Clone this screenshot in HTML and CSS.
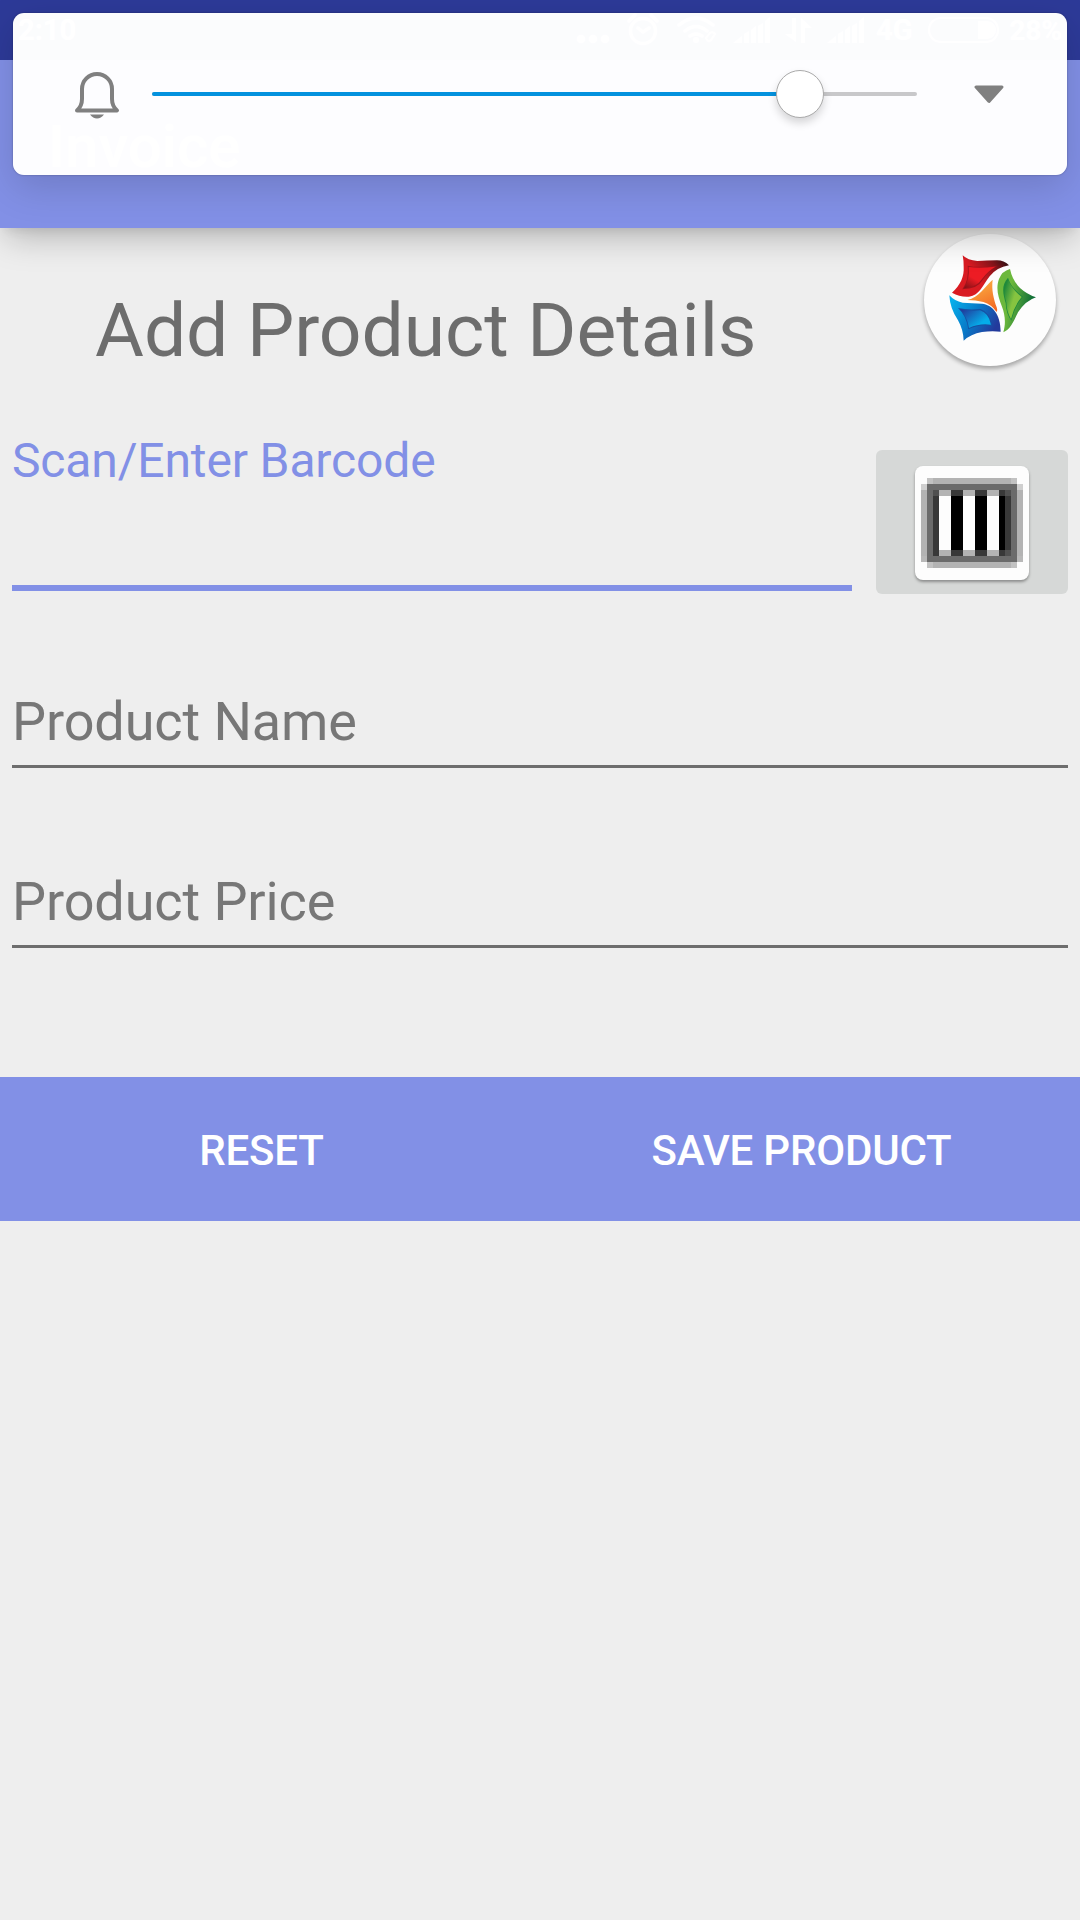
FILE: index.html
```html
<!DOCTYPE html>
<html lang="en">
<head>
<meta charset="utf-8">
<title>Invoice</title>
<link rel="stylesheet" href="styles.css">
</head>
<body>
<div class="statusbar">
  <span class="clock">2:10</span>
  <svg class="status-icons" width="436" height="36" viewBox="570 10 436 36" fill="#fff">
    <circle cx="581" cy="39" r="4.3"/><circle cx="593" cy="39" r="4.3"/><circle cx="605" cy="39" r="4.3"/>
    <g fill="none" stroke="#fff" stroke-width="3.4" stroke-linecap="round">
      <circle cx="643" cy="31" r="12.5"/><path d="M638 28l5 4 6-4M629 21l6-6M657 21l-6-6"/>
      <path d="M679 25q17-14 34 0M685 31q11-9 22 0M690 36q6-4 12 0"/>
      <path d="M706 38l4-5q3-2 5 1l-4 6q-3 3-5-2" stroke-width="2"/>
    </g>
    <circle cx="696" cy="40" r="3"/>
    <path id="signal" d="M733 43l9-7v7zM744 34l5-3v12h-5zM751 30l5-4v17h-5zM758 26l5-3v20h-5zM765 21l5-4v26h-5z"/>
    <path d="M792 18h4v24l-11-8h7zM801 43h4V28h7l-11-10z"/>
    <use href="#signal" x="94"/>
    <rect x="929" y="18" width="69" height="24" rx="12" fill="none" stroke="#fff" stroke-width="2"/>
    <path d="M978 21h9a9 9 0 0 1 0 18h-9z"/>
  </svg>
  <span class="network">4G</span>
  <span class="battery">28%</span>
</div>
<header class="appbar"><span class="appbar-title">Invoice</span></header>

<main class="content">
  <h1 class="title">Add Product Details</h1>
  <div class="scan-row">
    <label class="scan-field"><span class="scan-label">Scan/Enter Barcode</span></label>
    <button class="scan-button" aria-label="Scan barcode">
      <svg class="barcode" width="102" height="90" viewBox="0 0 17 15" shape-rendering="crispEdges">
        <path fill="#b3b3b3" d="M1 0h15v15H1zM0 2h17v11H0z"/>
        <path fill="#c2c2c2" d="M1 0h1v1H1zM15 0h1v1h-1zM1 14h1v1H1zM15 14h1v1h-1z"/>
        <path fill="#cfcfcf" d="M0 1h1v1H0zM16 1h1v1h-1z"/>
        <path fill="#b8b8b8" d="M0 13h1v1H0zM16 13h1v1h-1z"/>
        <path fill="#6b6b6b" d="M1 1h15v13H1z"/>
        <path fill="#383838" d="M2 2h13v11H2z"/>
        <path fill="#505050" d="M2 2h1v1H2zM14 2h1v1h-1zM14 12h1v1h-1z"/>
        <path fill="#b3b3b3" d="M3 2h2v11H3zM7 2h2v11H7zM11 2h2v11h-2z"/>
        <path fill="#fdfdfd" d="M3 3h2v9H3zM7 3h2v9H7zM11 3h2v9h-2z"/>
        <path fill="#000" d="M5 3h2v9H5zM9 3h2v9H9zM13 3h1v9h-1z"/>
      </svg>
    </button>
  </div>
  <label class="field">Product Name</label>
  <label class="field">Product Price</label>
  <div class="actions">
    <button class="action">Reset</button>
    <button class="action">Save Product</button>
  </div>
</main>

<div class="fab">
  <svg width="132" height="132" viewBox="72 42 396 396">
    <defs>
      <linearGradient id="red" x1="0" y1=".5" x2="1" y2="0"><stop offset=".35" stop-color="#d91b22"/><stop offset=".7" stop-color="#83151a"/><stop offset="1" stop-color="#111"/></linearGradient>
      <linearGradient id="redIn" x1="0" y1="1" x2=".6" y2=".3"><stop offset="0" stop-color="#7c1015"/><stop offset=".6" stop-color="#ed1c24"/></linearGradient>
      <linearGradient id="green" x1="0" y1="0" x2="1" y2=".3"><stop offset=".4" stop-color="#6cb83c"/><stop offset="1" stop-color="#0b6b36"/></linearGradient>
      <linearGradient id="greenIn" x1="0" y1="0" x2=".6" y2=".4"><stop offset="0" stop-color="#087b38"/><stop offset="1" stop-color="#86c440"/></linearGradient>
      <linearGradient id="blue" x1="0" y1="0" x2="1" y2=".5"><stop offset=".1" stop-color="#06aeea"/><stop offset=".55" stop-color="#087ac8"/><stop offset="1" stop-color="#233a9c"/></linearGradient>
      <linearGradient id="blueIn" x1="0" y1="0" x2=".8" y2=".6"><stop offset=".1" stop-color="#213b9c"/><stop offset="1" stop-color="#05adea"/></linearGradient>
      <linearGradient id="orange" x1=".4" y1="0" x2=".8" y2="1"><stop offset="0" stop-color="#fbb042"/><stop offset="1" stop-color="#f26522"/></linearGradient>
    </defs>
    <path fill="url(#red)" d="M188 106Q203 121 232 123Q260 122 291 121Q312 121 327 136Q290 142 269 169C247 198 239 226 207 230Q180 232 156 218C182 194 193 169 191 140Q191 121 188 106z"/>
    <path fill="#a3141b" d="M203 137Q233 144 293 137Q267 150 248 180Q233 207 187 208Q208 178 203 137z"/>
    <path fill="url(#redIn)" d="M206 141Q240 146 286 140Q263 153 246 177Q230 202 192 205Q210 176 206 141z"/>
    <path fill="url(#green)" d="M330 147Q337 181 360 204Q381 223 408 232Q377 242 354 277C340 307 330 329 310 337C318 309 315 283 306 260C294 229 287 204 297 177Q306 153 330 147z"/>
    <path fill="#1f8a3c" d="M324 173Q334 205 369 230Q344 258 334 302Q318 280 317 249C309 221 303 196 324 173z"/>
    <path fill="url(#greenIn)" d="M325 179Q337 209 365 231Q342 258 333 297Q320 276 319 247C311 221 309 198 325 179z"/>
    <path fill="url(#blue)" d="M148 226Q163 243 188 248Q215 250 246 251C276 254 302 281 302 335Q274 332 246 336Q212 342 191 362Q190 329 174 301Q150 266 148 226z"/>
    <path fill="#1552a4" d="M174 264Q205 271 242 267Q268 276 277 317Q240 311 205 328Q200 288 174 264z"/>
    <path fill="url(#blueIn)" d="M179 267Q209 274 240 271Q266 279 273 314Q238 309 207 324Q202 289 179 267z"/>
    <path fill="url(#orange)" d="M278 179C274 210 281 236 290 262Q293 269 290 276Q274 253 250 246Q227 240 202 240C238 231 254 200 278 179z"/>
  </svg>
</div>
<div class="appbar-shadow"></div>

<section class="volume" aria-label="Ring volume">
  <svg class="bell" width="46" height="48" viewBox="0 0 46 48">
    <path d="M3 39.5Q8 35 8 28V18a15 15 0 0 1 30 0v10q0 7 5 11.500z" fill="none" stroke="#808080" stroke-width="4" stroke-linejoin="round"/>
    <path d="M16 43.500h14q-3 4-7 4t-7-4z" fill="#808080"/>
  </svg>
  <div class="slider"><div class="slider-fill"></div><div class="slider-thumb"></div></div>
  <svg class="expand" width="30" height="19" viewBox="0 0 30 19"><path d="M2 2h26L15 16.500z" fill="#808080" stroke="#808080" stroke-width="3" stroke-linejoin="round"/></svg>
</section>
</body>
</html>
```
FILE: styles.css
```css
* { box-sizing: border-box; }

body {
  margin: 0;
  width: 1080px;
  height: 1920px;
  position: relative;
  overflow: hidden;
  background: #eee;
  font-family: Roboto, "Liberation Sans", sans-serif;
}

button {
  border: 0;
  padding: 0;
  font-family: inherit;
}

/* System status bar */
.statusbar {
  display: flex;
  align-items: flex-start;
  height: 60px;
  padding: 10px 18px 0;
  background: #2d3a98;
  color: #fff;
  font-size: 29px;
  line-height: 41px;
  font-weight: 700;
}

.clock { flex: 0 0 552px; }
.status-icons { flex: none; margin-right: -130px; }
.network { width: 134px; }
.battery { white-space: nowrap; font-size: 28px; }

.appbar {
  display: flex;
  align-items: center;
  height: 168px;
  padding: 4px 48px 0;
  background: #8290e6;
  color: #fff;
  font-size: 60px;
  font-weight: 500;
}

.appbar-shadow {
  position: absolute;
  top: 228px;
  left: 0;
  width: 1080px;
  height: 50px;
  overflow: hidden;
}

.appbar-shadow::before {
  content: "";
  display: block;
  height: 60px;
  margin: -60px 6px 0;
  box-shadow: 0 8px 34px rgba(0, 0, 0, .26), 0 2px 10px rgba(0, 0, 0, .08);
}

/* Product form */
.content {
  display: flex;
  flex-direction: column;
}

.title {
  margin: 58px 0 0;
  padding-left: 95px;
  color: #6d6d6d;
  font-size: 75px;
  line-height: 88px;
  font-weight: 400;
  letter-spacing: -.05px;
}

.scan-row {
  display: flex;
  gap: 24px;
  align-items: flex-end;
  height: 220px;
  padding: 0 12px;
}

.scan-field {
  flex: 1;
  height: 160px;
  margin-bottom: 3px;
  border-bottom: 6px solid #8290e6;
  color: #8290e6;
  font-size: 48px;
  line-height: 56px;
  letter-spacing: -.14px;
}

.scan-label { display: block; margin-top: 2px; }

.scan-button {
  display: flex;
  justify-content: center;
  width: 192px;
  height: 144px;
  padding-top: 16px;
  border-radius: 6px;
  background: #d6d8d7;
}

.barcode {
  box-sizing: content-box;
  padding: 12px 6px;
  border-radius: 8px;
  background: #fdfdfd;
  box-shadow: 0 2px 3px rgba(0, 0, 0, .35);
}

.field {
  height: 180px;
  margin: 0 12px;
  padding-top: 103px;
  border-bottom: 3px solid #6d6d6d;
  color: #777;
  font-size: 54px;
  line-height: 62px;
  letter-spacing: -.1px;
}

.field:first-of-type {
  height: 174px;
  padding-top: 97px;
}

.actions {
  display: grid;
  grid-template-columns: 522px 558px;
  height: 144px;
  margin-top: 129px;
  background: #8290e6;
}

.action {
  padding: 2px 0 0 1px;
  background: none;
  color: #fff;
  font-size: 42px;
  font-weight: 500;
  letter-spacing: -.2px;
  text-transform: uppercase;
}

/* Floating shortcut */
.fab {
  position: absolute;
  left: 924px;
  top: 234px;
  width: 132px;
  height: 132px;
  border-radius: 50%;
  background: #fdfdfd;
  box-shadow: 0 3px 4px rgba(0, 0, 0, .3);
}

/* Volume overlay */
.volume {
  position: absolute;
  top: 13px;
  left: 13px;
  display: flex;
  align-items: flex-start;
  width: 1054px;
  height: 162px;
  padding: 58px 63px 0 61px;
  border-radius: 11px;
  background: rgba(255, 255, 255, .983);
  box-shadow: 0 0 2px rgba(0, 0, 0, .35), 0 12px 38px rgba(0, 0, 0, .15);
}

.bell { flex: none; }

.slider {
  position: relative;
  width: 765px;
  height: 4px;
  margin: 21px 0 0 32px;
  border-radius: 2px;
  background: #c8c8ca;
}

.slider-fill {
  width: 648px;
  height: 4px;
  border-radius: 2px;
  background: #0492de;
}

.slider-thumb {
  position: absolute;
  left: 624px;
  top: -22px;
  width: 48px;
  height: 48px;
  border: 1px solid #aaa;
  border-radius: 50%;
  background: #fff;
  box-shadow: 0 5px 8px rgba(0, 0, 0, .16);
}

.expand { flex: none; margin: 14px 0 0 57px; }
```
